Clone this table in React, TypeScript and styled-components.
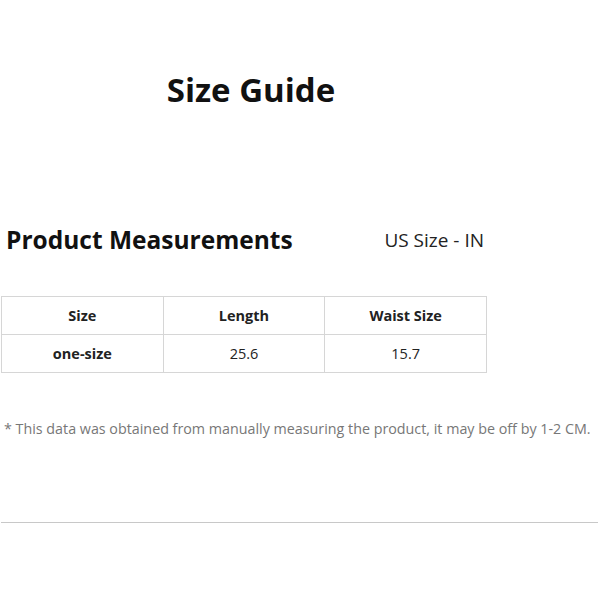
import React from 'react';
import styled, { createGlobalStyle } from 'styled-components';

const GlobalStyle = createGlobalStyle`
  body {
    margin: 0;
    background: #fff;
    font-family: "Open Sans", "Noto Sans", sans-serif;
    color: #111;
  }
`;

const Page = styled('main')`
  width: 600px;
  padding-top: 70px;
`;

const Title = styled('h1')`
  width: 502px;
  margin: 0;
  text-align: center;
  font-size: 33px;
  line-height: 40px;
  font-weight: 700;
`;

const HeadRow = styled('div')`
  display: flex;
  align-items: center;
  width: 486px;
  margin-top: 110px;
  padding: 0 2px 0 6px;
  box-sizing: border-box;
`;

const Heading = styled('h2')`
  flex: 1;
  margin: 0;
  font-size: 24.5px;
  line-height: 40px;
  font-weight: 700;
`;

const Units = styled('span')`
  font-size: 19px;
  color: #222;
`;

const Table = styled('table')`
  margin: 36px 0 0 1px;
  width: 486px;
  border-collapse: collapse;
  table-layout: fixed;
`;

const Cell = styled('td')<{ $bold?: boolean }>`
  border: 1px solid #d6d6d6;
  height: 37px;
  padding: 0;
  text-align: center;
  font-size: 14.5px;
  font-weight: ${(p) => (p.$bold ? 700 : 400)};
  color: #222;
`;

const Note = styled('p')`
  margin: 46px 0 0 4px;
  font-size: 14.3px;
  color: #777;
  white-space: nowrap;
`;

const Divider = styled('hr')`
  margin: 84px 0 0 1px;
  width: 597px;
  border: 0;
  border-top: 1px solid #c8c8c8;
`;

const rows = [['one-size', '25.6', '15.7']];

export default function App() {
  return (
    <Page>
      <GlobalStyle />
      <Title>Size Guide</Title>
      <HeadRow>
        <Heading>Product Measurements</Heading>
        <Units>US Size - IN</Units>
      </HeadRow>
      <Table>
        <tbody>
          <tr>
            <Cell $bold>Size</Cell>
            <Cell $bold>Length</Cell>
            <Cell $bold>Waist Size</Cell>
          </tr>
          {rows.map((r) => (
            <tr key={r[0]}>
              <Cell $bold>{r[0]}</Cell>
              <Cell>{r[1]}</Cell>
              <Cell>{r[2]}</Cell>
            </tr>
          ))}
        </tbody>
      </Table>
      <Note>* This data was obtained from manually measuring the product, it may be off by 1-2 CM.</Note>
      <Divider />
    </Page>
  );
}
